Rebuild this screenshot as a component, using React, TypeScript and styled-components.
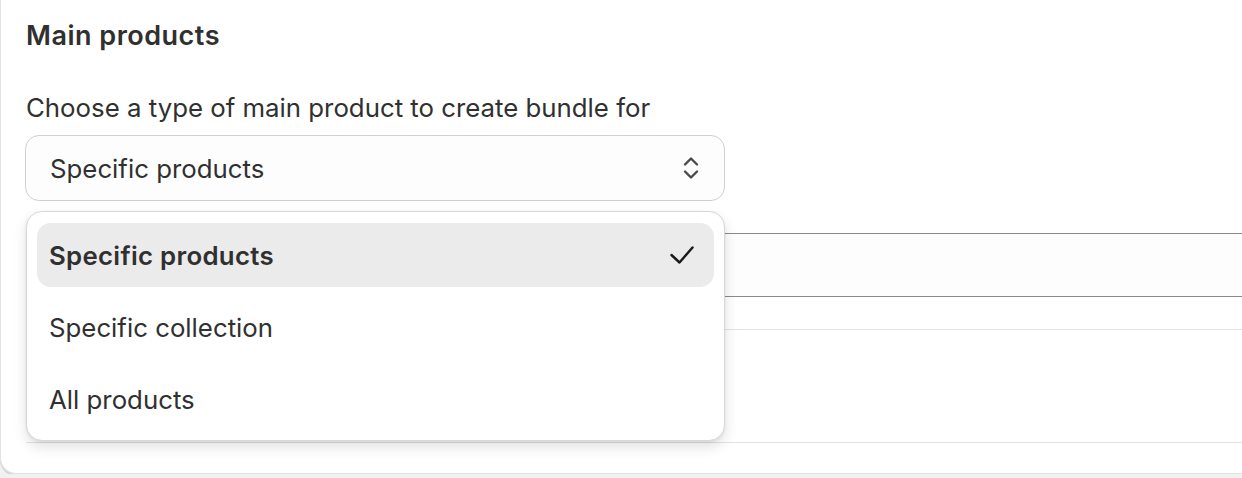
import React, { useState } from 'react';
import styled, { createGlobalStyle } from 'styled-components';

const GlobalStyle = createGlobalStyle`
  html, body {
    margin: 0;
    padding: 0;
    background: #f1f1f1;
    overflow: hidden;
  }
  body {
    font-family: Inter, "Liberation Sans", sans-serif;
    color: #303030;
  }
`;

const Card = styled.section`
  position: relative;
  width: 1320px;
  background: #ffffff;
  border: 1px solid #e3e3e3;
  border-top: none;
  border-radius: 0 0 16px 16px;
  box-shadow: 0 2px 0 0 #d4d4d4;
  padding: 20px 25px 30px;
  box-sizing: border-box;
`;

const Title = styled.h2`
  margin: 0 0 40px;
  font-size: 27px;
  line-height: 32px;
  letter-spacing: 0.5px;
  font-weight: 600;
  color: #303030;
`;

const Label = styled.div`
  font-size: 25.8px;
  line-height: 32px;
  color: #303030;
  margin-bottom: 11px;
`;

const SelectWrap = styled.div`
  position: relative;
  width: 700px;
  margin-left: -1px;
`;

const SelectBox = styled.button`
  width: 100%;
  height: 66px;
  display: flex;
  align-items: center;
  justify-content: space-between;
  padding: 0 24px 0 24px;
  box-sizing: border-box;
  background: #fdfdfd;
  border: 1px solid #d0d0d0;
  border-radius: 14px;
  font-family: inherit;
  font-size: 25.8px;
  color: #303030;
  cursor: pointer;
`;

const Menu = styled.ul`
  position: absolute;
  top: 76px;
  left: 1px;
  width: 699px;
  margin: 0;
  padding: 11px 10px 9px;
  box-sizing: border-box;
  list-style: none;
  background: #ffffff;
  border: 1px solid #d8d8d8;
  border-radius: 16px;
  box-shadow: 0 6px 14px rgba(0, 0, 0, 0.12), 0 1px 3px rgba(0, 0, 0, 0.08);
  display: flex;
  flex-direction: column;
  gap: 8px;
  z-index: 2;
`;

const Option = styled.li<{ $selected?: boolean }>`
  height: 64px;
  display: flex;
  align-items: center;
  justify-content: space-between;
  padding: 0 20px 0 12px;
  border-radius: 14px;
  font-size: 25.8px;
  font-weight: ${p => (p.$selected ? 600 : 400)};
  letter-spacing: ${p => (p.$selected ? '0.3px' : '0')};
  background: ${p => (p.$selected ? '#ebebeb' : 'transparent')};
  color: #303030;
  cursor: pointer;
`;

const Field = styled.div`
  margin-top: 32px;
  height: 64px;
  box-sizing: border-box;
  background: #fdfdfd;
  border: 1px solid #8a8a8a;
  border-radius: 14px;
`;

const List = styled.div`
  margin-top: 32px;
`;

const Row = styled.div<{ $h: number }>`
  height: ${p => p.$h}px;
  border-top: 1px solid #e3e3e3;
  box-sizing: border-box;
`;

const ChevronIcon = () => (
  <svg width="18" height="28" viewBox="0 0 18 28" fill="none">
    <path d="M3 10.5 L9 4.5 L15 10.5" stroke="#4a4a4a" strokeWidth="2.4" strokeLinecap="round" strokeLinejoin="round" />
    <path d="M3 17.5 L9 23.5 L15 17.5" stroke="#4a4a4a" strokeWidth="2.4" strokeLinecap="round" strokeLinejoin="round" />
  </svg>
);

const CheckIcon = () => (
  <svg width="24" height="20" viewBox="0 0 24 20" fill="none">
    <path d="M1.5 10 L9.5 17.5 L22.5 2.5" stroke="#1a1a1a" strokeWidth="2.4" strokeLinecap="round" strokeLinejoin="round" />
  </svg>
);

const options = ['Specific products', 'Specific collection', 'All products'];

export default function App() {
  const [value, setValue] = useState(options[0]);

  return (
    <>
      <GlobalStyle />
      <Card>
        <Title>Main products</Title>
        <Label>Choose a type of main product to create bundle for</Label>
        <SelectWrap>
          <SelectBox>
            <span>{value}</span>
            <ChevronIcon />
          </SelectBox>
          <Menu>
            {options.map(opt => (
              <Option key={opt} $selected={opt === value} onClick={() => setValue(opt)}>
                <span>{opt}</span>
                {opt === value && <CheckIcon />}
              </Option>
            ))}
          </Menu>
        </SelectWrap>
        <Field />
        <List>
          <Row $h={113} />
          <Row $h={1} />
        </List>
      </Card>
    </>
  );
}
